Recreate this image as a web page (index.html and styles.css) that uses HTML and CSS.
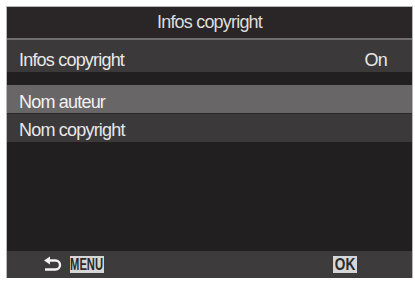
FILE: index.html
```html
<!DOCTYPE html>
<html>
<head>
<meta charset="utf-8">
<link rel="stylesheet" href="styles.css">
</head>
<body>
<div class="screen">
  <div class="title">Infos copyright</div>
  <div class="sep"></div>
  <div class="row row-main"><span>Infos copyright</span><span>On</span></div>
  <div class="gap"></div>
  <div class="row row-sel"><span>Nom auteur</span></div>
  <div class="line"></div>
  <div class="row row-item"><span>Nom copyright</span></div>
  <div class="body"></div>
  <div class="footer">
    <div class="left">
      <svg class="back" viewBox="0 0 19 17" width="19" height="17">
        <path d="M6 4.5 H12.5 A4.5 4.5 0 0 1 12.5 13.5 H2" fill="none" stroke="#f2f2f2" stroke-width="2.4"/>
        <path d="M1 4.5 L7 0.5 L7 8.5 Z" fill="#f2f2f2"/>
      </svg>
      <span class="key key-menu"><span class="key-text">MENU</span></span>
    </div>
    <span class="key key-ok"><span class="key-text ok-text">OK</span></span>
  </div>
</div>
</body>
</html>
```
FILE: styles.css
```css
html, body {
  margin: 0;
  padding: 0;
  background: #ffffff;
}
body {
  font-family: "Liberation Sans", Arial, sans-serif;
}
.screen {
  margin: 7px 0 0 7px;
  width: 405px;
  height: 271px;
  display: flex;
  flex-direction: column;
  background: #221f21;
  box-shadow: 0 0 0 1px #b8b8b8;
  color: #e8e8e8;
  font-size: 18px;
  letter-spacing: -0.8px;
}
.title {
  height: 31px;
  line-height: 31px;
  text-align: center;
  background: #2a2628;
  color: #dedede;
}
.sep {
  height: 2px;
  background: #6f6d6e;
}
.row {
  display: flex;
  justify-content: space-between;
  padding: 0 25px 0 12px;
  line-height: 22px;
}
.row-main {
  height: 32px;
  box-sizing: border-box;
  padding-top: 9px;
  background: #3b393a;
}
.gap {
  height: 13px;
  background: #221f21;
}
.row-sel {
  height: 28px;
  box-sizing: border-box;
  padding-top: 6px;
  background: #686667;
  color: #f2f2f2;
}
.line {
  height: 1px;
  background: #2a2729;
}
.row-item {
  height: 28px;
  box-sizing: border-box;
  padding-top: 5px;
  background: #3b393a;
}
.body {
  flex: 1;
  background: #221f21;
}
.footer {
  height: 27px;
  background: #3d3b3c;
  display: flex;
  align-items: center;
  justify-content: space-between;
  padding: 0 55px 0 36px;
}
.left {
  display: flex;
  align-items: center;
  gap: 8px;
}
.back {
  display: block;
}
.key {
  display: flex;
  justify-content: center;
  align-items: center;
  background: #d6d6d6;
  color: #2a2a2a;
  height: 17px;
  overflow: hidden;
}
.key-text {
  display: inline-block;
  font-weight: bold;
  font-size: 16px;
  line-height: 17px;
  letter-spacing: 0;
  transform: scaleX(0.7);
}
.ok-text {
  transform: scaleX(0.85);
}
.key-menu {
  width: 34px;
}
.key-ok {
  width: 24px;
}
```
